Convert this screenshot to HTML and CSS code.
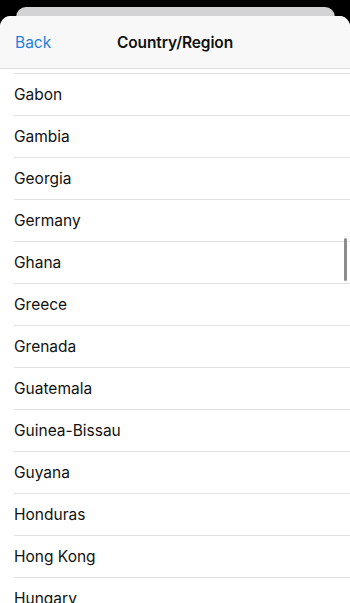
FILE: index.html
```html
<!DOCTYPE html>
<html>
<head>
<meta charset="utf-8">
<link rel="stylesheet" href="styles.css">
</head>
<body>
<div class="screen">
  <div class="back-card"></div>
  <div class="sheet">
    <div class="header">
      <span class="back">Back</span>
      <span class="title">Country/Region</span>
    </div>
    <div class="list">
      <div class="row partial"></div>
      <div class="row"><span>Gabon</span></div>
      <div class="row"><span>Gambia</span></div>
      <div class="row"><span>Georgia</span></div>
      <div class="row"><span>Germany</span></div>
      <div class="row"><span>Ghana</span></div>
      <div class="row"><span>Greece</span></div>
      <div class="row"><span>Grenada</span></div>
      <div class="row"><span>Guatemala</span></div>
      <div class="row"><span>Guinea-Bissau</span></div>
      <div class="row"><span>Guyana</span></div>
      <div class="row"><span>Honduras</span></div>
      <div class="row"><span>Hong Kong</span></div>
      <div class="row"><span>Hungary</span></div>
      <div class="scrollbar"></div>
    </div>
  </div>
</div>
</body>
</html>
```

FILE: styles.css
```css
html, body {
  margin: 0;
  padding: 0;
  background: #000;
}
.screen {
  width: 350px;
  height: 603px;
  overflow: hidden;
  background: #000;
  display: flex;
  flex-direction: column;
  align-items: center;
  padding-top: 7px;
  box-sizing: border-box;
  font-family: Inter, "Noto Sans", sans-serif;
}
.back-card {
  width: 319px;
  height: 20px;
  margin-left: 1px;
  background: #d3d3d5;
  border-radius: 10px 10px 0 0;
  flex: none;
}
.sheet {
  width: 350px;
  margin-top: -11px;
  flex: 1;
  background: #fff;
  border-radius: 11px 11px 0 0;
  overflow: hidden;
  display: flex;
  flex-direction: column;
}
.header {
  height: 52px;
  flex: none;
  background: #f8f8f8;
  border-bottom: 1px solid #dedede;
  position: relative;
  display: flex;
  align-items: center;
  justify-content: center;
}
.back {
  position: absolute;
  left: 15px;
  top: 17px;
  font-size: 15.5px;
  color: #2280de;
  line-height: 20px;
}
.title {
  font-size: 15.5px;
  font-weight: 600;
  color: #111;
  letter-spacing: -0.1px;
  margin-top: 1px;
}
.list {
  position: relative;
  flex: 1;
  overflow: hidden;
  padding-left: 14px;
}
.row {
  height: 41px;
  border-bottom: 1px solid #e2e2e2;
  display: flex;
  align-items: center;
  font-size: 15.5px;
  color: #111;
}
.row.partial {
  height: 4px;
}
.scrollbar {
  position: absolute;
  right: 3px;
  top: 169px;
  width: 3px;
  height: 43px;
  border-radius: 2px;
  background: #8c8c8c;
}
```
